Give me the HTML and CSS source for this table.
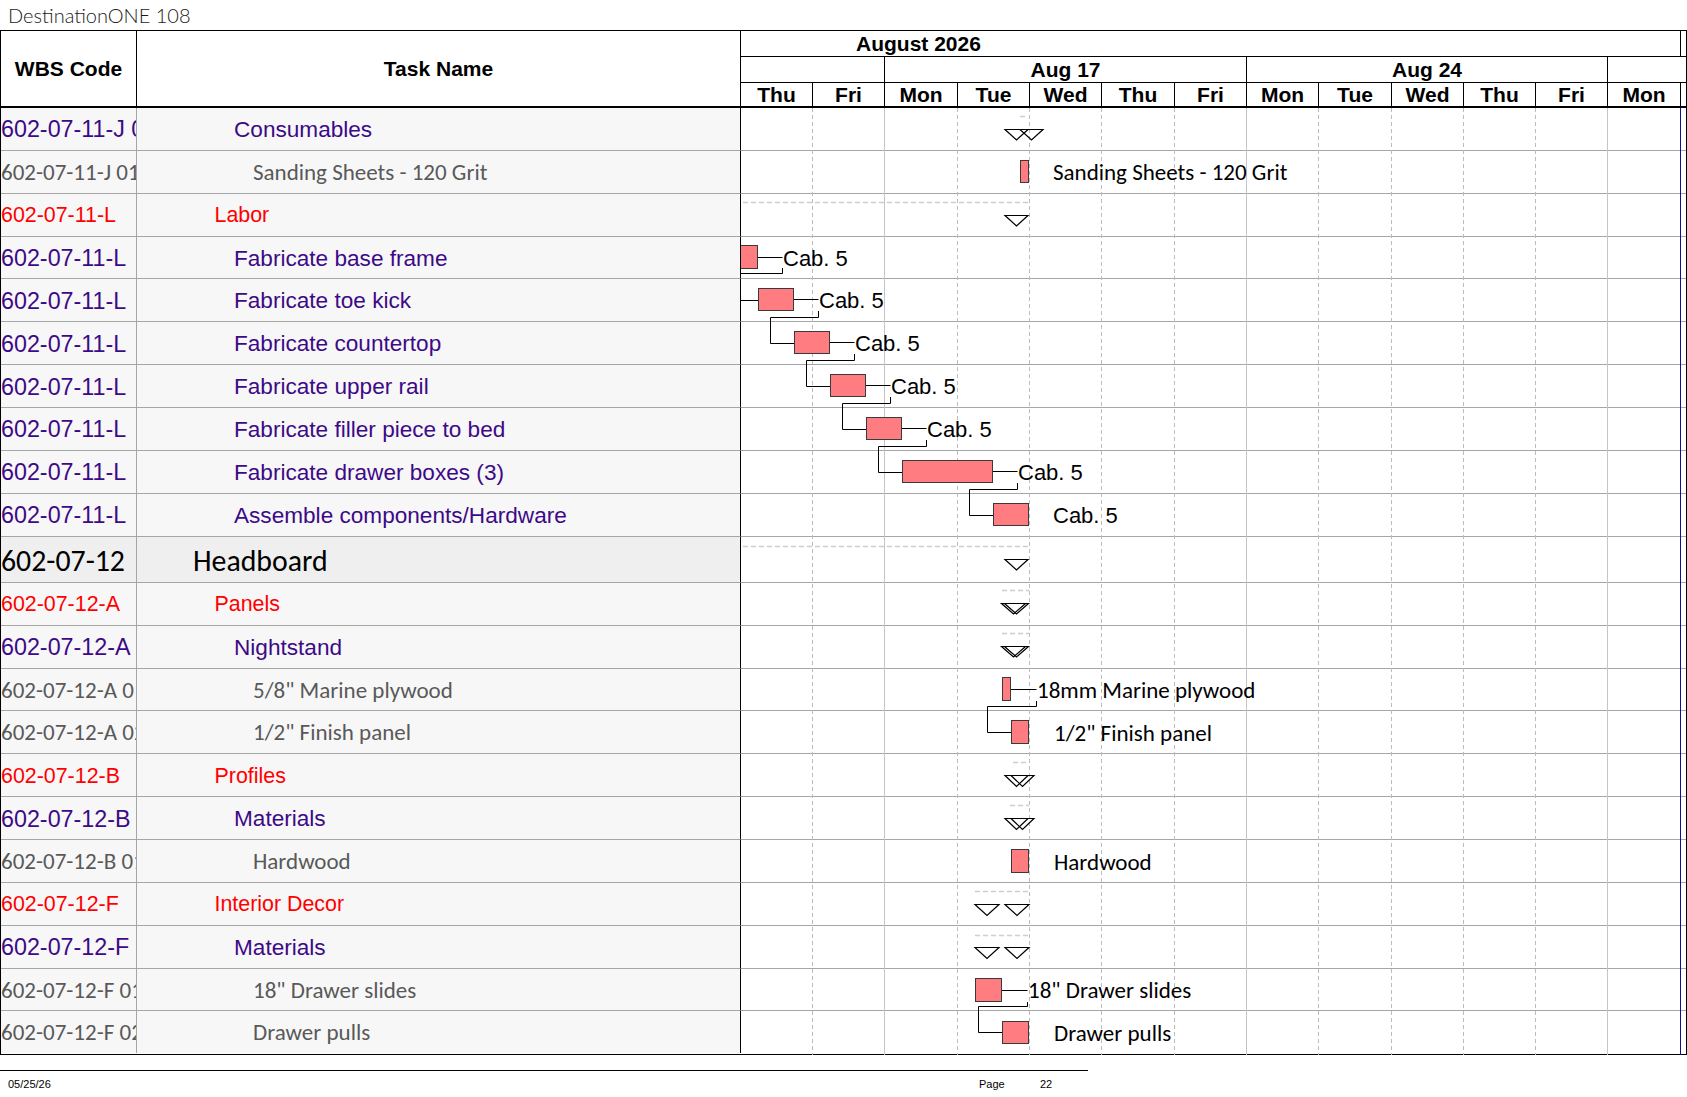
FILE: index.html
```html
<!DOCTYPE html>
<html lang="en">
<head>
<meta charset="utf-8">
<title>DestinationONE 108</title>
<link rel="stylesheet" href="styles.css">
</head>
<body>
<div class="title">DestinationONE 108</div>

<div class="sheet">
  <div class="head">
    <div class="h-wbs">WBS Code</div>
    <div class="h-task">Task Name</div>
    <div class="tscale">
      <div class="t-row t-month">
        <div class="month">August 2026</div>
        <div class="t-rest"></div>
      </div>
      <div class="t-row t-week">
        <div class="wk wk-a"></div>
        <div class="wk wk-b">Aug 17</div>
        <div class="wk wk-c">Aug 24</div>
        <div class="t-rest"></div>
      </div>
      <div class="t-row t-day">
        <div class="day d72">Thu</div>
        <div class="day d72">Fri</div>
        <div class="day d73">Mon</div>
        <div class="day d72">Tue</div>
        <div class="day d72">Wed</div>
        <div class="day d73">Thu</div>
        <div class="day d72">Fri</div>
        <div class="day d72">Mon</div>
        <div class="day d73">Tue</div>
        <div class="day d72">Wed</div>
        <div class="day d72">Thu</div>
        <div class="day d72">Fri</div>
        <div class="day d73">Mon</div>
        <div class="t-rest"></div>
      </div>
    </div>
  </div>

  <div class="rows">
    <div class="row purple"><div class="c-wbs">602-07-11-J 01</div><div class="c-task lv3">Consumables</div><div class="c-gantt"></div></div>
    <div class="row res"><div class="c-wbs">602-07-11-J 01</div><div class="c-task lv4">Sanding Sheets - 120 Grit</div><div class="c-gantt"></div></div>
    <div class="row red"><div class="c-wbs">602-07-11-L</div><div class="c-task lv2">Labor</div><div class="c-gantt"></div></div>
    <div class="row purple"><div class="c-wbs">602-07-11-L</div><div class="c-task lv3">Fabricate base frame</div><div class="c-gantt"></div></div>
    <div class="row purple"><div class="c-wbs">602-07-11-L</div><div class="c-task lv3">Fabricate toe kick</div><div class="c-gantt"></div></div>
    <div class="row purple"><div class="c-wbs">602-07-11-L</div><div class="c-task lv3">Fabricate countertop</div><div class="c-gantt"></div></div>
    <div class="row purple"><div class="c-wbs">602-07-11-L</div><div class="c-task lv3">Fabricate upper rail</div><div class="c-gantt"></div></div>
    <div class="row purple"><div class="c-wbs">602-07-11-L</div><div class="c-task lv3">Fabricate filler piece to bed</div><div class="c-gantt"></div></div>
    <div class="row purple"><div class="c-wbs">602-07-11-L</div><div class="c-task lv3">Fabricate drawer boxes (3)</div><div class="c-gantt"></div></div>
    <div class="row purple"><div class="c-wbs">602-07-11-L</div><div class="c-task lv3">Assemble components/Hardware</div><div class="c-gantt"></div></div>
    <div class="row hb"><div class="c-wbs">602-07-12</div><div class="c-task lv1">Headboard</div><div class="c-gantt"></div></div>
    <div class="row red"><div class="c-wbs">602-07-12-A</div><div class="c-task lv2">Panels</div><div class="c-gantt"></div></div>
    <div class="row purple"><div class="c-wbs">602-07-12-A</div><div class="c-task lv3">Nightstand</div><div class="c-gantt"></div></div>
    <div class="row res"><div class="c-wbs">602-07-12-A 01</div><div class="c-task lv4">5/8" Marine plywood</div><div class="c-gantt"></div></div>
    <div class="row res"><div class="c-wbs">602-07-12-A 02</div><div class="c-task lv4">1/2" Finish panel</div><div class="c-gantt"></div></div>
    <div class="row red"><div class="c-wbs">602-07-12-B</div><div class="c-task lv2">Profiles</div><div class="c-gantt"></div></div>
    <div class="row purple"><div class="c-wbs">602-07-12-B</div><div class="c-task lv3">Materials</div><div class="c-gantt"></div></div>
    <div class="row res"><div class="c-wbs">602-07-12-B 01</div><div class="c-task lv4">Hardwood</div><div class="c-gantt"></div></div>
    <div class="row red"><div class="c-wbs">602-07-12-F</div><div class="c-task lv2">Interior Decor</div><div class="c-gantt"></div></div>
    <div class="row purple"><div class="c-wbs">602-07-12-F</div><div class="c-task lv3">Materials</div><div class="c-gantt"></div></div>
    <div class="row res"><div class="c-wbs">602-07-12-F 01</div><div class="c-task lv4">18" Drawer slides</div><div class="c-gantt"></div></div>
    <div class="row res"><div class="c-wbs">602-07-12-F 02</div><div class="c-task lv4">Drawer pulls</div><div class="c-gantt"></div></div>
  </div>

  <svg class="chart" width="945" height="947" viewBox="741 108 945 947" xmlns="http://www.w3.org/2000/svg">
    <g class="grid-dash">
      <line x1="812.5" y1="108" x2="812.5" y2="1055"/>
      <line x1="957.5" y1="108" x2="957.5" y2="1055"/>
      <line x1="1029.5" y1="108" x2="1029.5" y2="1055"/>
      <line x1="1101.5" y1="108" x2="1101.5" y2="1055"/>
      <line x1="1174.5" y1="108" x2="1174.5" y2="1055"/>
      <line x1="1318.5" y1="108" x2="1318.5" y2="1055"/>
      <line x1="1391.5" y1="108" x2="1391.5" y2="1055"/>
      <line x1="1463.5" y1="108" x2="1463.5" y2="1055"/>
      <line x1="1535.5" y1="108" x2="1535.5" y2="1055"/>
    </g>
    <g class="grid-solid">
      <line x1="884.5" y1="108" x2="884.5" y2="1055"/>
      <line x1="1246.5" y1="108" x2="1246.5" y2="1055"/>
      <line x1="1607.5" y1="108" x2="1607.5" y2="1055"/>
    </g>
    <line class="today" x1="1680.5" y1="108" x2="1680.5" y2="1055"/>

    <g class="sumline">
      <line x1="1020" y1="116.5" x2="1028" y2="116.5"/>
      <line x1="743" y1="202.5" x2="1029" y2="202.5"/>
      <line x1="743" y1="546.5" x2="1029" y2="546.5"/>
      <line x1="1002" y1="590.5" x2="1029" y2="590.5"/>
      <line x1="1002" y1="633.5" x2="1029" y2="633.5"/>
      <line x1="1013" y1="762.5" x2="1029" y2="762.5"/>
      <line x1="1010" y1="805.5" x2="1029" y2="805.5"/>
      <line x1="975" y1="891.5" x2="1029" y2="891.5"/>
      <line x1="975" y1="935.5" x2="1029" y2="935.5"/>
    </g>

    <g class="tri">
      <polygon points="1005,129.5 1028,129.5 1016.5,140"/>
      <polygon points="1020,129.5 1043,129.5 1031.5,140"/>
      <polygon points="1005,215.5 1028,215.5 1016.5,226"/>
      <polygon points="1005,559.5 1028,559.5 1016.5,570"/>
      <polygon points="1001.5,603.5 1025.5,603.5 1013.5,614"/>
      <polygon points="1004.5,603.5 1028.5,603.5 1016.5,614"/>
      <polygon points="1001.5,646.5 1025.5,646.5 1013.5,657"/>
      <polygon points="1004.5,646.5 1028.5,646.5 1016.5,657"/>
      <polygon points="1005,775.5 1028,775.5 1016.5,786.5"/>
      <polygon points="1011,775.5 1034,775.5 1022.5,786.5"/>
      <polygon points="1005,818.5 1028,818.5 1016.5,829.5"/>
      <polygon points="1011,818.5 1034,818.5 1022.5,829.5"/>
      <polygon points="975,904.5 999,904.5 987,915.5"/>
      <polygon points="1005,904.5 1029,904.5 1017,915.5"/>
      <polygon points="975,947.5 999,947.5 987,958.5"/>
      <polygon points="1005,947.5 1029,947.5 1017,958.5"/>
    </g>

    <g class="link">
      <polyline points="757.5,257.5 782.5,257.5"/>
      <polyline points="782.5,268 782.5,273.5 741,273.5"/>
      <polyline points="741,300.5 758.5,300.5"/>
      <polyline points="793.5,299.5 818.5,299.5"/>
      <polyline points="818.5,311 818.5,317.5 770.5,317.5 770.5,343.5 794.5,343.5"/>
      <polyline points="829.5,342.5 854.5,342.5"/>
      <polyline points="854.5,354 854.5,360.5 806.5,360.5 806.5,386.5 830.5,386.5"/>
      <polyline points="865.5,385.5 890.5,385.5"/>
      <polyline points="890.5,397 890.5,403.5 842.5,403.5 842.5,429.5 866.5,429.5"/>
      <polyline points="901.5,428.5 926.5,428.5"/>
      <polyline points="926.5,440 926.5,446.5 878.5,446.5 878.5,472.5 902.5,472.5"/>
      <polyline points="992.5,471.5 1017.5,471.5"/>
      <polyline points="1017.5,483 1017.5,489.5 969.5,489.5 969.5,515.5 993.5,515.5"/>
      <polyline points="1010.5,689.5 1036.5,689.5"/>
      <polyline points="1036.5,701 1036.5,706.5 987.5,706.5 987.5,732.5 1011.5,732.5"/>
      <polyline points="1001.5,990.5 1027.5,990.5"/>
      <polyline points="1027.5,1002 1027.5,1006.5 978.5,1006.5 978.5,1032.5 1002.5,1032.5"/>
    </g>

    <g class="bar">
      <rect x="1020.5" y="160.5" width="8" height="22"/>
      <rect x="740.5" y="245.5" width="17" height="23"/>
      <rect x="758.5" y="288.5" width="35" height="22"/>
      <rect x="794.5" y="331.5" width="35" height="22"/>
      <rect x="830.5" y="374.5" width="35" height="22"/>
      <rect x="866.5" y="417.5" width="35" height="22"/>
      <rect x="902.5" y="460.5" width="90" height="22"/>
      <rect x="993.5" y="503.5" width="35" height="22"/>
      <rect x="1002.5" y="677.5" width="8" height="23"/>
      <rect x="1011.5" y="720.5" width="17" height="23"/>
      <rect x="1011.5" y="849.5" width="17" height="23"/>
      <rect x="975.5" y="978.5" width="26" height="23"/>
      <rect x="1002.5" y="1021.5" width="26" height="22"/>
    </g>

    <g class="lbl-a">
      <text x="783" y="265.5">Cab. 5</text>
      <text x="819" y="308">Cab. 5</text>
      <text x="855" y="351">Cab. 5</text>
      <text x="891" y="394">Cab. 5</text>
      <text x="927" y="437">Cab. 5</text>
      <text x="1018" y="480">Cab. 5</text>
      <text x="1053" y="523">Cab. 5</text>
    </g>
    <g class="lbl-c">
      <text x="1053" y="180">Sanding Sheets - 120 Grit</text>
      <text x="1037" y="698">18mm Marine plywood</text>
      <text x="1054" y="741">1/2" Finish panel</text>
      <text x="1054" y="869.5">Hardwood</text>
      <text x="1028" y="998">18" Drawer slides</text>
      <text x="1054" y="1041">Drawer pulls</text>
    </g>
  </svg>
</div>

<div class="footer">
  <span class="f-date">05/25/26</span>
  <span class="f-page">Page</span>
  <span class="f-num">22</span>
</div>
</body>
</html>
```

FILE: styles.css
```css
* { box-sizing: border-box; }

html, body {
  margin: 0;
  padding: 0;
  background: #ffffff;
}

body {
  width: 1687px;
  font-family: "Liberation Sans", Arial, sans-serif;
  color: #000;
}

.title {
  height: 30px;
  padding-left: 8px;
  font-family: "Century Gothic", Lato, "Liberation Sans", sans-serif;
  font-weight: 300;
  font-size: 20px;
  line-height: 30px;
  color: #1a1a1a;
}

.sheet {
  position: relative;
  width: 1687px;
  border: 1px solid #000;
}

/* ---------- header ---------- */
.head {
  display: flex;
  height: 77px;
  border-bottom: 2px solid #000;
  font-weight: bold;
  font-size: 21px;
}

.h-wbs,
.h-task {
  display: flex;
  align-items: center;
  justify-content: center;
  border-right: 1px solid #000;
}

.h-wbs { width: 136px; }
.h-task { width: 604px; }

.tscale {
  flex: 1;
  display: flex;
  flex-direction: column;
}

.t-row {
  display: flex;
}

.t-month,
.t-week {
  height: 26px;
  border-bottom: 1px solid #000;
  line-height: 25px;
}

.t-day {
  height: 23px;
  line-height: 23px;
}

.t-rest { flex: 1; }

.month {
  width: 940px;
  border-right: 1px solid #000;
  padding-left: 115px;
}

.wk {
  border-right: 1px solid #000;
  text-align: center;
}
.wk-a { width: 144px; }
.wk-b { width: 362px; }
.wk-c { width: 361px; }

.day {
  border-right: 1px solid #000;
  text-align: center;
}
.d72 { width: 72px; }
.d73 { width: 73px; }

/* ---------- rows ---------- */
.row {
  display: flex;
  height: 42.87px;
  font-size: 22.6px;
}

.row > div {
  border-bottom: 1px solid #a6a6a6;
  display: flex;
  align-items: center;
  white-space: nowrap;
  overflow: hidden;
}

.row:last-child > div { border-bottom: none; height: 41.87px; }

.c-wbs {
  width: 136px;
  background: #f7f7f7;
  border-right: 1px solid #a6a6a6;
}

.c-task {
  width: 604px;
  background: #f7f7f7;
  border-right: 1px solid #000;
}

.c-gantt {
  flex: 1;
  background: #fff;
}

.lv1 { padding-left: 56px; }
.lv2 { padding-left: 77.5px; }
.lv3 { padding-left: 97px; }
.lv4 { padding-left: 116px; }

.purple > div,
.red > div { padding-top: 2px; }

.purple { color: #3d0a87; }
.purple .c-wbs { font-size: 23.3px; }

.red {
  color: #ff0000;
  font-size: 21.4px;
}

.res {
  color: #595959;
  font-family: Carlito, Lato, "Liberation Sans", sans-serif;
  font-size: 23px;
}

.hb {
  height: 46.3px;
  color: #000;
  font-family: Carlito, Lato, "Liberation Sans", sans-serif;
  font-size: 29.8px;
}
.hb > div { padding-top: 3px; }
.hb .c-wbs,
.hb .c-task { background: #efefef; }

/* ---------- gantt chart canvas ---------- */
.chart {
  position: absolute;
  left: 740px;
  top: 77px;
  display: block;
  overflow: hidden;
}

.grid-dash line {
  stroke: #bcbcbc;
  stroke-width: 1;
  stroke-dasharray: 4 3;
}

.grid-solid line {
  stroke: #c4c4c4;
  stroke-width: 1;
}

.today {
  stroke: #10108f;
  stroke-width: 1;
}

.sumline line {
  stroke: #cdcdcd;
  stroke-width: 1.5;
  stroke-dasharray: 5 3;
}

.tri polygon {
  fill: none;
  stroke: #000;
  stroke-width: 1.2;
}

.link polyline {
  fill: none;
  stroke: #000;
  stroke-width: 1;
}

.bar rect {
  fill: #ff7c80;
  stroke: #3a3a3a;
  stroke-width: 1;
}

.lbl-a text {
  font-family: "Liberation Sans", Arial, sans-serif;
  font-size: 22px;
  fill: #000;
}

.lbl-c text {
  font-family: Carlito, Lato, "Liberation Sans", sans-serif;
  font-size: 23px;
  fill: #000;
}

/* ---------- footer ---------- */
.footer {
  width: 1088px;
  margin-top: 15px;
  border-top: 1px solid #000;
  padding: 7px 0 0 8px;
  display: grid;
  grid-template-columns: 971px 61px auto;
  font-size: 11px;
  line-height: 13px;
}
```
